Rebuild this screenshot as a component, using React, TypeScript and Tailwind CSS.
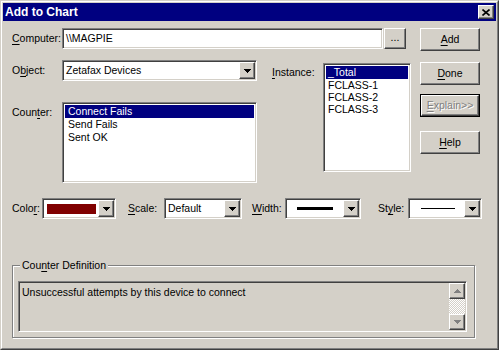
import React from 'react';

const raised =
  'border border-t-white border-l-white border-b-[#404040] border-r-[#404040] shadow-[inset_-1px_-1px_0_#808080]';
const sunken =
  'border border-t-[#808080] border-l-[#808080] border-b-white border-r-white shadow-[inset_1px_1px_0_#404040,inset_-1px_-1px_0_#d4d0c8]';

const U = ({ c }: { c: string }) => (
  <span className="underline decoration-1 underline-offset-[2px]">{c}</span>
);

const DownTriangle = ({ color = '#000' }: { color?: string }) => (
  <svg width="7" height="4" viewBox="0 0 7 4" shapeRendering="crispEdges">
    <rect x="0" y="0" width="7" height="1" fill={color} />
    <rect x="1" y="1" width="5" height="1" fill={color} />
    <rect x="2" y="2" width="3" height="1" fill={color} />
    <rect x="3" y="3" width="1" height="1" fill={color} />
  </svg>
);

const UpTriangle = ({ color = '#000' }: { color?: string }) => (
  <svg width="7" height="4" viewBox="0 0 7 4" shapeRendering="crispEdges">
    <rect x="3" y="0" width="1" height="1" fill={color} />
    <rect x="2" y="1" width="3" height="1" fill={color} />
    <rect x="1" y="2" width="5" height="1" fill={color} />
    <rect x="0" y="3" width="7" height="1" fill={color} />
  </svg>
);

const Combo = ({ className, children }: { className: string; children: React.ReactNode }) => (
  <div className={`${sunken} bg-white flex h-[21px] p-px ${className}`}>
    <div className="flex-1 flex items-center min-w-0">{children}</div>
    <div className={`${raised} bg-[#d4d0c8] w-[16px] flex items-center justify-center`}>
      <DownTriangle />
    </div>
  </div>
);

const Button = ({ children, className = '' }: { children: React.ReactNode; className?: string }) => (
  <div className={`${raised} bg-[#d4d0c8] h-[23px] flex items-center justify-center ${className}`}>
    {children}
  </div>
);

export default function App() {
  return (
    <div className="w-[499px] h-[350px] bg-[#d4d0c8] border border-t-[#d4d0c8] border-l-[#d4d0c8] border-b-[#404040] border-r-[#404040] font-['Liberation_Sans',Arial,sans-serif] text-[10.5px] text-black leading-[13px] select-none">
      <div className="h-full border border-t-white border-l-white border-b-[#808080] border-r-[#808080] p-px flex flex-col">
        {/* Title bar */}
        <div className="h-[18px] bg-[#000080] flex items-center pl-[2px] pr-[2px]">
          <span className="text-white font-bold text-[12px] flex-1">Add to Chart</span>
          <div className={`${raised} bg-[#d4d0c8] w-[16px] h-[14px] flex items-center justify-center`}>
            <svg width="8" height="7" viewBox="0 0 8 7">
              <path d="M0.5 0.5L7.5 6.5M7.5 0.5L0.5 6.5" stroke="#000" strokeWidth="1.6" />
            </svg>
          </div>
        </div>

        {/* Body */}
        <div className="flex-1 flex flex-col pl-[9px]">
          <div className="flex pt-[7px]">
            {/* Left area */}
            <div className="w-[399px] flex flex-col">
              <div className="flex h-[21px]">
                <div className="w-[50px] flex items-center">
                  <span><U c="C" />omputer:</span>
                </div>
                <div className={`${sunken} bg-white w-[321px] flex items-center pl-[3px]`}>\\MAGPIE</div>
                <div className={`${raised} bg-[#d4d0c8] w-[22px] ml-px flex items-center justify-center pb-[2px]`}>...</div>
              </div>

              <div className="flex mt-[11px]">
                <div className="flex flex-col">
                  <div className="flex h-[21px]">
                    <div className="w-[50px] flex items-center">
                      <span>O<U c="b" />ject:</span>
                    </div>
                    <Combo className="w-[195px]">
                      <span className="pl-[2px]">Zetafax Devices</span>
                    </Combo>
                  </div>
                  <div className="flex mt-[21px]">
                    <div className="w-[50px] pt-[4px]">
                      <span>Coun<U c="t" />er:</span>
                    </div>
                    <div className={`${sunken} bg-white w-[195px] h-[81px] p-[2px]`}>
                      <div className="bg-[#000080] text-white h-[13px] pl-[3px]">Connect Fails</div>
                      <div className="h-[13px] pl-[3px]">Send Fails</div>
                      <div className="h-[13px] pl-[3px]">Sent OK</div>
                    </div>
                  </div>
                </div>

                <div className="flex ml-[15px] mt-[3px]">
                  <div className="w-[51px] pt-[3px]">
                    <span><U c="I" />nstance:</span>
                  </div>
                  <div className={`${sunken} bg-white w-[88px] h-[109px] p-[2px]`}>
                    <div className="bg-[#000080] text-white h-[13px] pl-[2px]">_Total</div>
                    <div className="h-[12px] pl-[2px]">FCLASS-1</div>
                    <div className="h-[12px] pl-[2px]">FCLASS-2</div>
                    <div className="h-[12px] pl-[2px]">FCLASS-3</div>
                  </div>
                </div>
              </div>
            </div>

            {/* Right buttons */}
            <div className="ml-[9px] w-[60px] flex flex-col">
              <Button><span><U c="A" />dd</span></Button>
              <Button className="mt-[11px]"><span><U c="D" />one</span></Button>
              <div className="mt-[9px] h-[23px] border border-black">
                <div className={`${raised} bg-[#d4d0c8] h-full flex items-center justify-center text-[#808080] [text-shadow:1px_1px_0_#fff]`}>
                  <span><U c="E" />xplain&gt;&gt;</span>
                </div>
              </div>
              <Button className="mt-[14px]"><span><U c="H" />elp</span></Button>
            </div>
          </div>

          {/* Color / Scale / Width / Style row */}
          <div className="flex h-[21px] mt-[15px]">
            <div className="w-[30px] flex items-center"><span>Colo<U c="r" />:</span></div>
            <Combo className="w-[74px]">
              <div className="ml-[3px] w-[49px] h-[10px] bg-[#800000]" />
            </Combo>
            <div className="ml-[12px] w-[36px] flex items-center"><span><U c="S" />cale:</span></div>
            <Combo className="w-[78px]">
              <span className="pl-[2px]">Default</span>
            </Combo>
            <div className="ml-[10px] w-[33px] flex items-center"><span><U c="W" />idth:</span></div>
            <Combo className="w-[76px]">
              <div className="ml-[10px] w-[36px] h-[3px] bg-black" />
            </Combo>
            <div className="ml-[17px] w-[30px] flex items-center"><span>St<U c="y" />le:</span></div>
            <Combo className="w-[74px]">
              <div className="ml-[11px] w-[34px] h-px bg-black" />
            </Combo>
          </div>

          {/* Counter Definition group */}
          <div className="relative mt-[46px] w-[463px] h-[73px] border border-[#808080] shadow-[inset_1px_1px_0_#fff,1px_1px_0_#fff]">
            <span className="absolute -top-[7px] left-[7px] px-[2px] bg-[#d4d0c8]">
              Cou<U c="n" />ter Definition
            </span>
            <div className={`${sunken} ml-[5px] mt-[15px] w-[449px] h-[51px] bg-[#d4d0c8] flex p-px`}>
              <div className="flex-1 pl-[2px] pt-[3px]">Unsuccessful attempts by this device to connect</div>
              <div className="w-[16px] flex flex-col">
                <div className={`${raised} bg-[#d4d0c8] h-[16px] flex items-center justify-center`}>
                  <UpTriangle color="#808080" />
                </div>
                <div className="flex-1 bg-[image:repeating-conic-gradient(#d4d0c8_0%_25%,#ffffff_0%_50%)] bg-size-[2px_2px]" />
                <div className={`${raised} bg-[#d4d0c8] h-[16px] flex items-center justify-center`}>
                  <DownTriangle color="#808080" />
                </div>
              </div>
            </div>
          </div>
        </div>
      </div>
    </div>
  );
}
